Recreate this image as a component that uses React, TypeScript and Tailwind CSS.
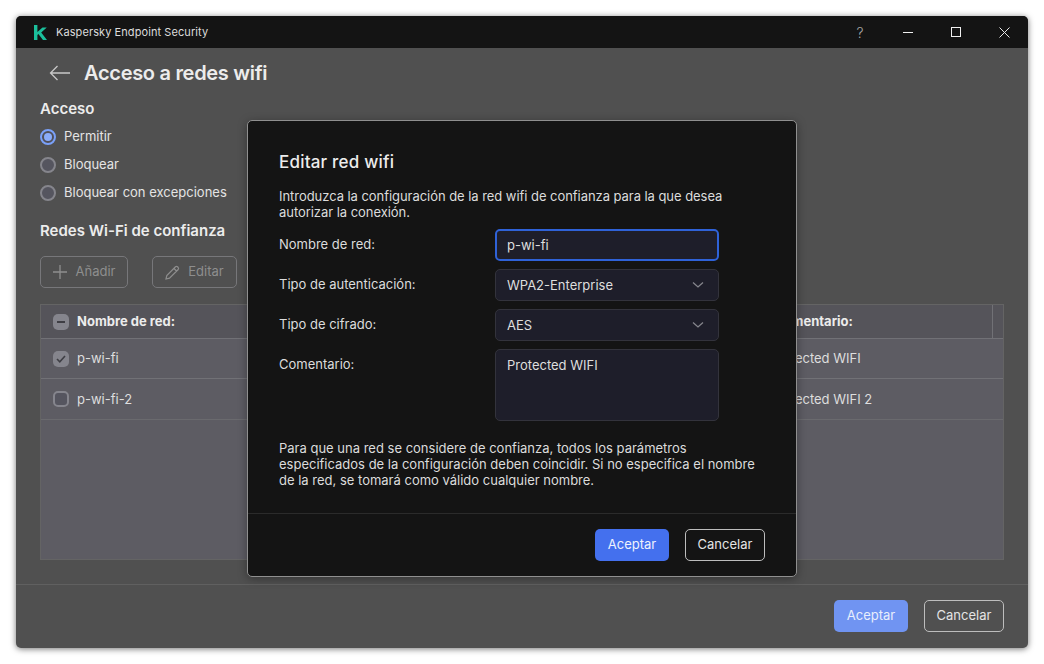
import React from "react";

const font = { fontFamily: "Inter, 'Noto Sans', sans-serif" };

function Radio({ checked, label }: { checked?: boolean; label: string }) {
  return (
    <div className="flex h-7 items-center gap-2">
      {checked ? (
        <span className="flex h-4 w-4 items-center justify-center rounded-full border-2 border-[#7aa0f8] bg-[#50505a]">
          <span className="h-2 w-2 rounded-full bg-[#8aacfa]" />
        </span>
      ) : (
        <span className="h-4 w-4 rounded-full border-2 border-[#85858c] bg-[#55555f]" />
      )}
      <span className="text-[13px] text-[#e4e4e4]">{label}</span>
    </div>
  );
}

function Chevron() {
  return (
    <svg width="12" height="8" viewBox="0 0 12 8" fill="none" stroke="#85858c" strokeWidth="1.3">
      <path d="M1 1.5 L6 6 L11 1.5" />
    </svg>
  );
}

function FormRow({ label, children, h = "h-8" }: { label: string; children: React.ReactNode; h?: string }) {
  return (
    <div className="flex items-start">
      <div className="w-[216px] pt-[7px] text-[13px] leading-4 text-[#dcdcdc]">{label}</div>
      <div className={`w-[224px] ${h}`}>{children}</div>
    </div>
  );
}

function SelectBox({ value }: { value: string }) {
  return (
    <div className="flex h-8 items-center justify-between rounded-[5px] border border-[#33333c] bg-[#1e1e2a] pl-[11px] pr-[14px] text-[13px] text-[#dedede]">
      <span className="pt-px">{value}</span>
      <Chevron />
    </div>
  );
}

export default function App() {
  return (
    <div className="h-[664px] w-[1044px] overflow-hidden bg-white p-4" style={font}>
      <div className="relative flex h-[632px] w-[1012px] flex-col overflow-hidden rounded-[5px] bg-[#505050] shadow-[0_1px_6px_rgba(0,0,0,0.55)]">
        <header className="flex h-8 shrink-0 items-center bg-[#141414] pl-[17px]">
          <svg width="14" height="15" viewBox="0 0 14 15" fill="#1bbf9c">
            <path d="M1 0 H4.4 V15 H1 Z M4.4 7 L9.5 2.5 H13.8 L8.2 7.5 L14 15 H10 L5.4 9 L4.4 10 Z" />
          </svg>
          <span className="ml-[9px] text-[11px] tracking-[0.08px] text-[#dcdcdc]">Kaspersky Endpoint Security</span>
          <div className="ml-auto flex items-center">
            <span className="w-[48px] text-center text-[14px] font-light text-[#a8a8a8]">?</span>
            <span className="flex w-[48px] justify-center">
              <span className="h-px w-[10px] bg-[#f0f0f0]" />
            </span>
            <span className="flex w-[48px] justify-center">
              <span className="h-[10px] w-[10px] border border-[#f0f0f0]" />
            </span>
            <span className="flex w-[48px] justify-center">
              <svg width="11" height="11" viewBox="0 0 11 11" stroke="#e8e8e8" strokeWidth="1">
                <path d="M0.5 0.5 L10.5 10.5 M10.5 0.5 L0.5 10.5" />
              </svg>
            </span>
          </div>
        </header>

        <main className="flex min-h-0 flex-1 flex-col pl-6 pr-6">
          <div className="flex h-[50px] shrink-0 items-center pl-[9px]">
            <svg width="22" height="16" viewBox="0 0 22 16" fill="none" stroke="#c8c8c8" strokeWidth="1.3">
              <path d="M21 8 H1.5 M8.5 1 L1.5 8 L8.5 15" />
            </svg>
            <h1 className="ml-[13px] text-[20px] leading-6 font-semibold tracking-[-0.3px] text-[#ececec]">Acceso a redes wifi</h1>
          </div>
          <h2 className="mt-[1px] text-[15px] leading-5 font-semibold text-[#ececec]">Acceso</h2>
          <div className="mt-[4px] flex flex-col">
            <Radio checked label="Permitir" />
            <Radio label="Bloquear" />
            <Radio label="Bloquear con excepciones" />
          </div>
          <h2 className="mt-[14px] text-[15px] leading-5 font-semibold text-[#ececec]">Redes Wi-Fi de confianza</h2>
          <div className="mt-[15px] flex gap-6">
            <div className="flex h-8 w-[88px] items-center justify-center gap-[9px] rounded-[5px] border border-[#77777a] text-[13px] text-[#8e8e8e]">
              <svg width="14" height="14" viewBox="0 0 14 14" stroke="#8e8e8e" strokeWidth="1.3">
                <path d="M7 0 V14 M0 7 H14" />
              </svg>
              Añadir
            </div>
            <div className="flex h-8 w-[85px] items-center justify-center gap-2 rounded-[5px] border border-[#77777a] text-[13px] text-[#8e8e8e]">
              <svg width="15" height="15" viewBox="0 0 15 15" fill="none" stroke="#8e8e8e" strokeWidth="1.2">
                <path d="M1 14 L1.8 10.5 L10.5 1.8 Q11.5 1 12.5 1.8 L13.2 2.5 Q14 3.5 13.2 4.5 L4.5 13.2 Z M9 3.5 L11.5 6" />
              </svg>
              Editar
            </div>
          </div>
          <div className="mt-4 flex h-[256px] w-[964px] flex-col border border-[#646464] bg-[#5d5c63] text-[13px]">
            <div className="flex h-[34px] items-center border-b border-[#717176] bg-[#55545a] font-bold text-[#ececec]">
              <span className="ml-3 mr-2 flex h-4 w-4 items-center justify-center rounded-[5px] bg-[#85858d]">
                <span className="h-[2px] w-2 bg-[#3e3e44]" />
              </span>
              <span className="w-[697px] pt-px">Nombre de red:</span>
              <span className="pt-px">Comentario:</span>
              <span className="ml-auto mr-[10px] h-full border-l border-[#717176]" />
            </div>
            <div className="flex h-10 items-center border-b border-[#717176] text-[#dedede]">
              <span className="ml-3 mr-2 flex h-4 w-4 items-center justify-center rounded-[5px] bg-[#85858d]">
                <svg width="10" height="8" viewBox="0 0 10 8" fill="none" stroke="#3e3e44" strokeWidth="1.6">
                  <path d="M1 4 L3.8 6.8 L9 1" />
                </svg>
              </span>
              <span className="w-[693px]">p-wi-fi</span>
              <span>Protected WIFI</span>
            </div>
            <div className="flex h-[41px] items-center border-b border-[#6a6a6e] text-[#dedede]">
              <span className="ml-3 mr-2 h-4 w-4 rounded-[5px] border-2 border-[#85858d] bg-[#55555f]" />
              <span className="w-[693px] pt-px">p-wi-fi-2</span>
              <span className="pt-px">Protected WIFI 2</span>
            </div>
          </div>
        </main>

        <footer className="flex h-16 shrink-0 items-center justify-end gap-4 border-t border-[#606060] pb-px pr-6">
          <div className="flex h-8 w-[74px] items-center justify-center rounded-[5px] bg-[#7094f2] text-[13px] text-[#e8eefc]">Aceptar</div>
          <div className="flex h-8 w-[80px] items-center justify-center rounded-[5px] border border-[#bdbdbd] text-[13px] text-[#e4e4e4]">Cancelar</div>
        </footer>

        <div className="absolute left-[231px] top-[104px] flex h-[457px] w-[550px] flex-col rounded-[5px] border border-[#8f8f8f] bg-[#141414] shadow-[0_2px_10px_rgba(0,0,0,0.35)]">
          <div className="flex flex-1 flex-col px-[31px]">
            <h3 className="mt-[31px] text-[17px] leading-5 font-medium tracking-[0.2px] text-[#ececec]">Editar red wifi</h3>
            <p className="mt-4 text-[13px] leading-4 tracking-[-0.05px] text-[#dcdcdc]">
              Introduzca la configuración de la red wifi de confianza para la que desea<br />autorizar la conexión.
            </p>
            <div className="mt-[9px] flex flex-col gap-2">
              <FormRow label="Nombre de red:">
                <div className="flex h-8 items-center rounded-[5px] border-2 border-[#2f62d8] bg-[#1e1e2a] pl-[10px] pt-px text-[13px] text-[#dedede]">p-wi-fi</div>
              </FormRow>
              <FormRow label="Tipo de autenticación:"><SelectBox value="WPA2-Enterprise" /></FormRow>
              <FormRow label="Tipo de cifrado:"><SelectBox value="AES" /></FormRow>
              <FormRow label="Comentario:" h="h-[72px]">
                <div className="h-[72px] rounded-[5px] border border-[#33333c] bg-[#1e1e2a] pl-[11px] pt-[7px] text-[13px] leading-4 text-[#dedede]">Protected WIFI</div>
              </FormRow>
            </div>
            <p className="mt-[19px] text-[13px] leading-4 text-[#dcdcdc]">
              Para que una red se considere de confianza, todos los parámetros<br />especificados de la configuración deben coincidir. Si no especifica el nombre<br />de la red, se tomará como válido cualquier nombre.
            </p>
          </div>
          <div className="flex h-[63px] shrink-0 items-center justify-end gap-4 border-t border-[#2b2b2b] pr-[31px]">
            <div className="flex h-8 w-[74px] items-center justify-center rounded-[5px] bg-[#4470ee] text-[13px] text-[#eef2fd]">Aceptar</div>
            <div className="flex h-8 w-[80px] items-center justify-center rounded-[5px] border border-[#bdbdbd] text-[13px] text-[#e4e4e4]">Cancelar</div>
          </div>
        </div>
      </div>
    </div>
  );
}
